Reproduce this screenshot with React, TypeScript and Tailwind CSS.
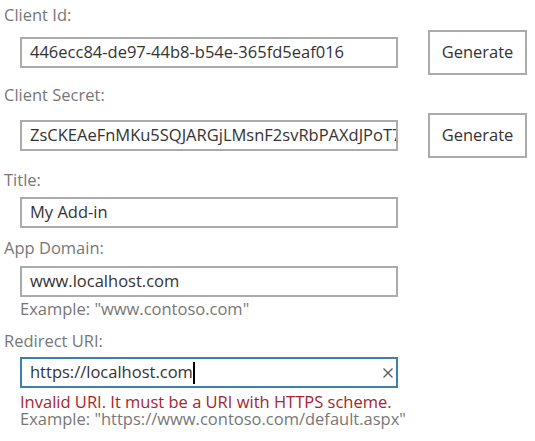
import type { ReactNode } from "react";

const Label = ({ children, className = "" }: { children: ReactNode; className?: string }) => (
  <div className={`h-5 pl-1 text-[16.5px] leading-5 text-[#777] ${className}`}>{children}</div>
);

const Box = ({
  children,
  focused = false,
}: {
  children: ReactNode;
  focused?: boolean;
}) => (
  <div
    className={`ml-5 flex h-[31px] w-[378px] items-center overflow-hidden whitespace-nowrap border-2 pl-[8px] pr-[2px] text-[16.5px] text-[#333] ${
      focused ? "border-[#3d7fae]" : "border-[#ababab]"
    }`}
  >
    {children}
  </div>
);

const GenerateButton = () => (
  <button className="ml-[30px] h-[45px] w-[99px] border-2 border-[#ababab] bg-white text-[16.5px] text-[#333]">
    Generate
  </button>
);

export default function App() {
  return (
    <div
      className="h-[441px] w-[535px] bg-white pt-[5px]"
      style={{ fontFamily: '"Segoe UI", "Open Sans", "Noto Sans", sans-serif' }}
    >
      <Label>Client Id:</Label>
      <div className="mt-[5px] flex items-center">
        <Box>446ecc84-de97-44b8-b54e-365fd5eaf016</Box>
        <GenerateButton />
      </div>

      <Label className="mt-[10px]">Client Secret:</Label>
      <div className="mt-[8px] flex items-center">
        <Box>ZsCKEAeFnMKu5SQJARGjLMsnF2svRbPAXdJPoT7</Box>
        <GenerateButton />
      </div>

      <Label className="mt-[12px]">Title:</Label>
      <div className="mt-[7px]">
        <Box>My Add-in</Box>
      </div>

      <Label className="mt-[10px]">App Domain:</Label>
      <div className="mt-[8px]">
        <Box>www.localhost.com</Box>
      </div>
      <div className="ml-5 mt-[3px] text-[16.5px] leading-[17px] text-[#777]">
        Example: "www.contoso.com"
      </div>

      <Label className="mt-[14px]">Redirect URI:</Label>
      <div className="mt-[6px]">
        <Box focused>
          <span>https://localhost.com</span>
          <span className="h-[22px] w-[2px] bg-black" />
          <svg
            className="ml-auto mr-[1px]"
            width="10"
            height="10"
            viewBox="0 0 10 10"
            fill="none"
            stroke="#555"
            strokeWidth="1.2"
          >
            <path d="M0.5 0.5L9.5 9.5M9.5 0.5L0.5 9.5" />
          </svg>
        </Box>
      </div>
      <div className="ml-5 mt-[5px] text-[16.5px] leading-[17px]">
        <div className="text-[#a4262c]">Invalid URI. It must be a URI with HTTPS scheme.</div>
        <div className="text-[#777]">Example: "https://www.contoso.com/default.aspx"</div>
      </div>
    </div>
  );
}
